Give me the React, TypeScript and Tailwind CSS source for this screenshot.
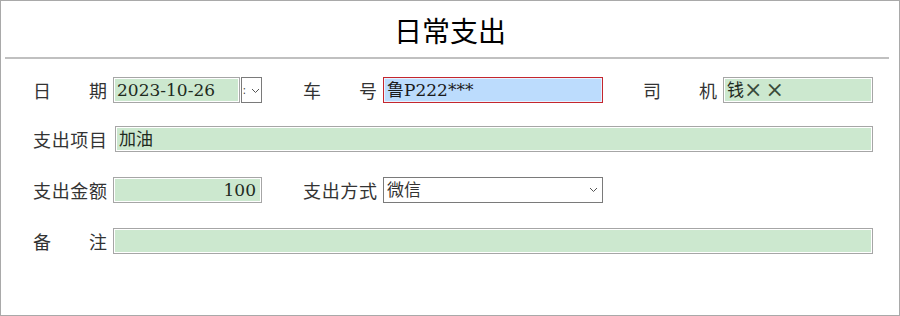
import React from 'react';

const cjk = "font-['Noto_Sans_CJK_SC',sans-serif]";
const field = "font-['DejaVu_Serif','Noto_Sans_CJK_SC',serif]";

const Label = ({ chars }: { chars: string[] }) => (
  <div className={`w-[74px] h-[26px] flex items-center justify-between text-[18px] text-[#333] leading-none ${cjk}`}>
    {chars.map((c, i) => (
      <span key={i}>{c}</span>
    ))}
  </div>
);

const GreenInput = ({ value, className = '', right = false }: any) => (
  <div
    className={`h-[26px] flex items-center border border-[#a6a6a6] bg-[#cce8cf] shadow-[inset_0_0_0_1px_#ffffff] text-[17px] text-[#1e2a1e] leading-none ${field} ${
      right ? 'justify-end pr-[5px]' : 'pl-[3px]'
    } ${className}`}
  >
    {value}
  </div>
);

const Chevron = () => (
  <svg width="9" height="6" viewBox="0 0 9 6" fill="none">
    <path d="M1 1 L4.5 4.5 L8 1" stroke="#555" strokeWidth="1" />
  </svg>
);

export default function App() {
  return (
    <div className="w-[900px] h-[316px] bg-white border border-[#a9a9a9]">
      <div className={`h-[56px] flex items-center justify-center text-[28px] text-black pt-[1px] ${cjk}`}>
        日常支出
      </div>
      <div className="ml-[4px] w-[884px] h-[2px] bg-[#c0c0c0]" />

      <div className="pl-[32px]">
        {/* 日期 / 车号 / 司机 */}
        <div className="mt-[18px] flex items-center">
          <Label chars={['日', '期']} />
          <GreenInput value="2023-10-26" className="ml-[6px] w-[127px]" />
          <div className="ml-[1px] w-[21px] h-[26px] border border-[#7a7a7a] bg-white flex items-center">
            <span className="ml-[1px] text-[10px] leading-none text-[#333]">:</span>
            <div className="ml-[5px] mt-[2px]">
              <Chevron />
            </div>
          </div>
          <div className="ml-[41px]">
            <Label chars={['车', '号']} />
          </div>
          <div
            className={`ml-[6px] w-[220px] h-[26px] flex items-center pl-[3px] border border-[#c4262e] bg-[#bcdcfd] shadow-[inset_0_0_0_1px_#e8f2ff] text-[17px] text-[#1a1a1a] leading-none ${field}`}
          >
            鲁P222***
          </div>
          <div className="ml-[40px]">
            <Label chars={['司', '机']} />
          </div>
          <div
            className={`ml-[6px] w-[150px] h-[26px] flex items-center pl-[3px] border border-[#a6a6a6] bg-[#cce8cf] shadow-[inset_0_0_0_1px_#ffffff] text-[17px] text-[#1e2a1e] leading-none ${field}`}
          >
            <span>钱</span>
            <span className="text-[22px] tracking-[3px] text-[#3a4a3a]">××</span>
          </div>
        </div>

        {/* 支出项目 */}
        <div className="mt-[23px] flex items-center">
          <Label chars={['支', '出', '项', '目']} />
          <GreenInput value="加油" className="ml-[8px] w-[758px]" />
        </div>

        {/* 支出金额 / 支出方式 */}
        <div className="mt-[25px] flex items-center">
          <Label chars={['支', '出', '金', '额']} />
          <GreenInput value="100" right className="ml-[6px] w-[149px]" />
          <div className="ml-[41px]">
            <Label chars={['支', '出', '方', '式']} />
          </div>
          <div
            className={`ml-[6px] w-[220px] h-[26px] flex items-center justify-between pl-[3px] pr-[4px] border border-[#7a7a7a] bg-white text-[17px] text-[#333] leading-none ${field}`}
          >
            <span>微信</span>
            <Chevron />
          </div>
        </div>

        {/* 备注 */}
        <div className="mt-[25px] flex items-center">
          <Label chars={['备', '注']} />
          <GreenInput value="" className="ml-[6px] w-[760px]" />
        </div>
      </div>
    </div>
  );
}
